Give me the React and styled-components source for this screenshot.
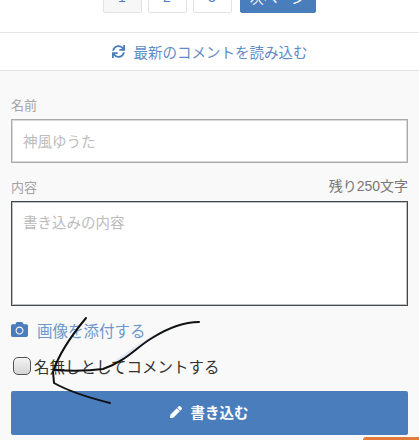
import styled, { createGlobalStyle } from 'styled-components';
import { FaSync, FaCamera, FaPen } from 'react-icons/fa';

const GlobalStyle = createGlobalStyle`
  html, body {
    margin: 0;
    padding: 0;
    background: #fff;
  }
  * {
    box-sizing: border-box;
  }
`;

const Page = styled.div`
  position: relative;
  width: 419px;
  height: 440px;
  overflow: hidden;
  background: #fff;
  font-family: "Liberation Sans", "Noto Sans CJK JP", sans-serif;
`;

// the page is scrolled, so the pager sits partly above the window
const Pager = styled.div`
  display: flex;
  justify-content: center;
  gap: 6px;
  height: 32px;
  transform: translateY(-19px);
  padding-right: 1px;
`;

const PageButton = styled.div`
  width: ${(p) => (p.$wide ? '76px' : '39px')};
  height: 32px;
  margin-left: ${(p) => (p.$wide ? '2px' : '0')};
  display: flex;
  align-items: center;
  justify-content: center;
  font-size: 14px;
  border-radius: 2px;
  border: 1px solid ${(p) => (p.$wide ? '#4a7dbc' : '#e2e2e2')};
  background: ${(p) => (p.$wide ? '#4a7dbc' : p.$current ? '#f7f7f7' : '#fff')};
  color: ${(p) => (p.$wide ? '#fff' : '#4a7dbc')};
`;

const ReloadBar = styled.div`
  height: 39px;
  display: flex;
  align-items: center;
  justify-content: center;
  gap: 9px;
  border-top: 1px solid #e4e4e4;
  border-bottom: 1px solid #e4e4e4;
  color: #5f8cc4;
  font-size: 14.5px;
  svg {
    color: #4a7dbc;
    font-size: 13px;
  }
`;

const Form = styled.div`
  background: #f9f9f9;
  height: 369px;
  padding: 25px 11px 0;
`;

const FieldHead = styled.div`
  display: flex;
  justify-content: space-between;
  align-items: flex-end;
  height: 20px;
  margin-bottom: 3px;
`;

const Label = styled.span`
  color: #a3a3a3;
  font-size: 13px;
  line-height: 18px;
  padding-bottom: 1px;
`;

const Remaining = styled.span`
  color: #777;
  font-size: 14px;
  line-height: 22px;
  padding-bottom: 1px;
`;

const TextBox = styled.div`
  height: ${(p) => (p.$tall ? '105px' : '44px')};
  margin-bottom: ${(p) => (p.$tall ? '0' : '15px')};
  padding: ${(p) => (p.$tall ? '9px 11px' : '0 11px 2px')};
  display: flex;
  align-items: ${(p) => (p.$tall ? 'flex-start' : 'center')};
  background: #fff;
  border: 1px solid ${(p) => (p.$tall ? '#44494d' : '#aaaaaa')};
  box-shadow: inset 0 0 0 1px ${(p) => (p.$tall ? 'rgba(70, 75, 80, 0.35)' : 'rgba(170, 170, 170, 0.45)')};
  color: #bcbcbc;
  font-size: 14.5px;
`;

const AttachRow = styled.div`
  display: flex;
  align-items: center;
  gap: 9px;
  height: 20px;
  margin-top: 14px;
  padding-bottom: 1px;
  color: #6b98cc;
  font-size: 15.5px;
  svg {
    color: #4a7dbc;
    font-size: 17px;
  }
`;

const CheckRow = styled.label`
  display: flex;
  align-items: center;
  gap: 3px;
  height: 22px;
  margin-top: 15px;
  padding-left: 2px;
  color: #333;
  font-size: 15.5px;
`;

const CheckBox = styled.span`
  width: 18px;
  height: 18px;
  border-radius: 5px;
  border: 1.5px solid #555;
  background: linear-gradient(#f4f4f4, #d4d4d4);
`;

const SubmitButton = styled.div`
  height: 44px;
  margin-top: 14px;
  display: flex;
  align-items: center;
  justify-content: center;
  gap: 9px;
  background: #4a7dbc;
  border-radius: 2px;
  color: #fff;
  font-size: 14.5px;
  font-weight: 700;
  padding: 0 1px 3px 0;
  svg {
    font-size: 12px;
  }
`;

const OrangeTab = styled.div`
  position: absolute;
  right: 0;
  bottom: 0;
  width: 56px;
  height: 3px;
  background: #e07b3c;
  border-radius: 3px 0 0 0;
`;

const Scribble = styled.svg`
  position: absolute;
  left: 0;
  top: 0;
  pointer-events: none;
`;

export default function App() {
  return (
    <Page>
      <GlobalStyle />
      <Pager>
        <PageButton $current>1</PageButton>
        <PageButton>2</PageButton>
        <PageButton>3</PageButton>
        <PageButton $wide>次ページ</PageButton>
      </Pager>
      <ReloadBar>
        <FaSync />
        最新のコメントを読み込む
      </ReloadBar>
      <Form>
        <FieldHead>
          <Label>名前</Label>
        </FieldHead>
        <TextBox>神風ゆうた</TextBox>
        <FieldHead>
          <Label>内容</Label>
          <Remaining>残り250文字</Remaining>
        </FieldHead>
        <TextBox $tall>書き込みの内容</TextBox>
        <AttachRow>
          <FaCamera />
          画像を添付する
        </AttachRow>
        <CheckRow>
          <CheckBox />
          名無しとしてコメントする
        </CheckRow>
        <SubmitButton>
          <FaPen />
          書き込む
        </SubmitButton>
      </Form>
      <OrangeTab />
      <Scribble width="419" height="440" viewBox="0 0 419 440" fill="none">
        <path d="M118 360 C135 348 150 338 166 330" stroke="#dfe9f5" strokeWidth="3" strokeLinecap="round" />
        <path
          d="M86 318 C76 330 60 350 53 372 L54 383 C70 392 90 398 110 403"
          stroke="#111"
          strokeWidth="2"
          strokeLinecap="round"
          strokeLinejoin="round"
        />
        <path
          d="M54 370 C70 371 88 371 103 369 C125 362 138 346 152 338 C168 328 185 322 199 322"
          stroke="#111"
          strokeWidth="2"
          strokeLinecap="round"
        />
      </Scribble>
    </Page>
  );
}
